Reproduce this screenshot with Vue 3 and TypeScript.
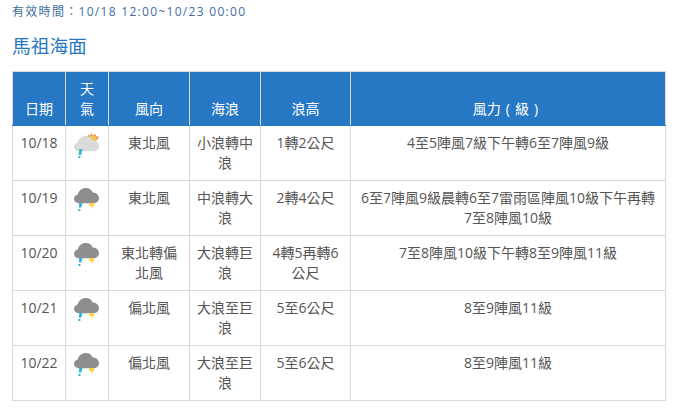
<script setup lang="ts">
interface Row { date: string; icon: 'sun' | 'storm'; dir: string; wave: string; height: string; force: string }
const rows: Row[] = [
  { date: '10/18', icon: 'sun', dir: '東北風', wave: '小浪轉中浪', height: '1轉2公尺', force: '4至5陣風7級下午轉6至7陣風9級' },
  { date: '10/19', icon: 'storm', dir: '東北風', wave: '中浪轉大浪', height: '2轉4公尺', force: '6至7陣風9級晨轉6至7雷雨區陣風10級下午再轉7至8陣風10級' },
  { date: '10/20', icon: 'storm', dir: '東北轉偏北風', wave: '大浪轉巨浪', height: '4轉5再轉6公尺', force: '7至8陣風10級下午轉8至9陣風11級' },
  { date: '10/21', icon: 'storm', dir: '偏北風', wave: '大浪至巨浪', height: '5至6公尺', force: '8至9陣風11級' },
  { date: '10/22', icon: 'storm', dir: '偏北風', wave: '大浪至巨浪', height: '5至6公尺', force: '8至9陣風11級' },
]
const cloud = 'M5 15.2C2 15.2 0 13.4 0 10.8 0 8.4 1.8 6.8 3.8 6.4 4.6 2.6 8 0 12 0 15.4 0 17.8 2 18.6 4.4 22 4.2 25 6.8 25 10 25 13 22.8 15.2 20 15.2Z'
</script>

<template>
  <div class="page">
    <p class="valid">有效時間：10/18 12:00~10/23 00:00</p>
    <h2 class="title">馬祖海面</h2>
    <table class="forecast">
      <colgroup>
        <col style="width: 53px" /><col style="width: 43px" /><col style="width: 81px" />
        <col style="width: 71px" /><col style="width: 90px" /><col style="width: 315px" />
      </colgroup>
      <thead>
        <tr>
          <th>日期</th><th>天氣</th><th>風向</th><th>海浪</th><th>浪高</th>
          <th>風力<span class="paren">(</span>級<span class="paren">)</span></th>
        </tr>
      </thead>
      <tbody>
        <tr v-for="r in rows" :key="r.date">
          <td>{{ r.date }}</td>
          <td class="icon-cell">
            <svg class="wx" width="26" height="26" viewBox="0 0 26 26">
              <template v-if="r.icon === 'sun'">
                <path d="M13 4 14.6 1.6 16 3 17.6 0 19 2.6 21.4 1 22 3.6 24.6 3.2 24 6 20 8Z" fill="#ee8a55" />
                <circle cx="18.6" cy="6.4" r="4" fill="#f7c24f" />
                <path :d="cloud" transform="translate(0 3)" fill="#dadada" />
                <path d="M5.4 16H8.4L7.2 22H4.6Z" fill="#2bb8d0" />
                <rect x="4.4" y="23" width="2" height="2" fill="#2bb8d0" />
              </template>
              <template v-else>
                <path :d="cloud" fill="#8e8e8e" />
                <path d="M5.2 15H8.4L7.4 19.6H5Z" fill="#2bb8d0" />
                <rect x="4.4" y="21" width="2" height="2" fill="#2bb8d0" />
                <path d="M15.4 15H20L19.2 16.6H21L17 21 17.8 18H15.2Z" fill="#f6d43a" />
              </template>
            </svg>
          </td>
          <td>{{ r.dir }}</td>
          <td>{{ r.wave }}</td>
          <td>{{ r.height }}</td>
          <td>{{ r.force }}</td>
        </tr>
      </tbody>
    </table>
  </div>
</template>

<style scoped>
.page {
  width: 676px;
  height: 409px;
  box-sizing: border-box;
  padding: 4px 0 0 12px;
  overflow: hidden;
  font-family: "Open Sans", "Noto Sans CJK TC", sans-serif;
  background: #fff;
}
.valid {
  margin: 0;
  font-size: 12px;
  line-height: 16px;
  letter-spacing: 1.3px;
  color: #3d6f9e;
}
.title {
  margin: 13px 0 0;
  font-size: 18.72px;
  line-height: 26px;
  font-weight: 400;
  color: #2778c4;
}
.forecast {
  margin-top: 12px;
  width: 654px;
  table-layout: fixed;
  border-collapse: collapse;
  font-size: 14px;
  line-height: 20px;
  color: #555;
  text-align: center;
}
th, td {
  border: 1px solid #d9d9d9;
  padding: 7px;
}
th {
  padding: 7px 8px 6px;
  border-bottom-color: #2778c4;
  background: #2778c4;
  color: #fff;
  font-weight: 400;
  vertical-align: bottom;
}
td {
  vertical-align: top;
}
.paren {
  margin: 0 5px;
}
.icon-cell {
  padding: 0;
}
.wx {
  display: block;
  margin: 7px auto 0;
}
</style>
